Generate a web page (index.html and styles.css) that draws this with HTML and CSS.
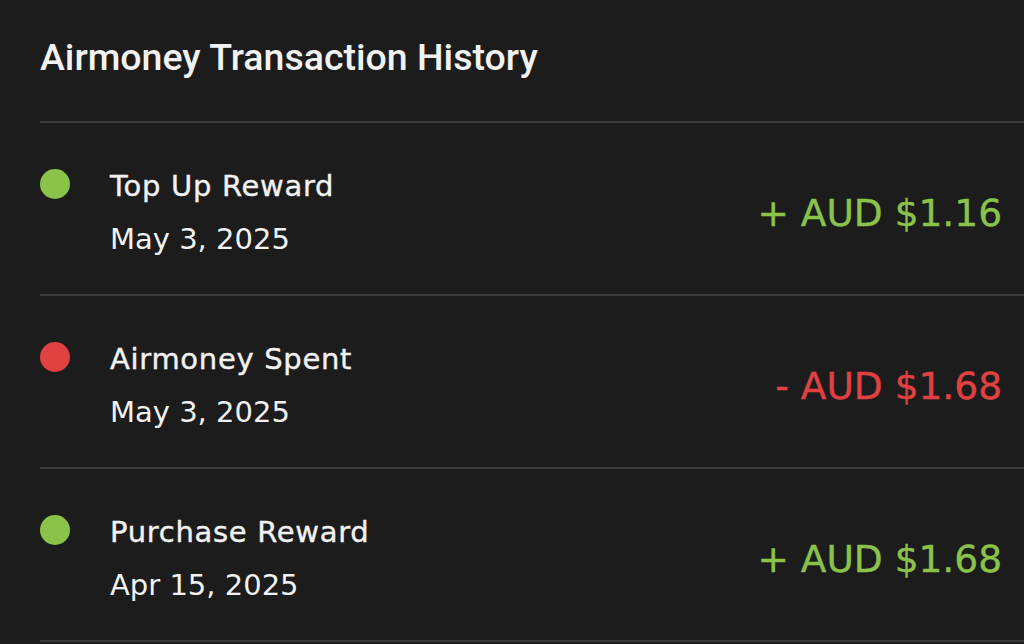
FILE: index.html
```html
<!DOCTYPE html>
<html lang="en">
<head>
<meta charset="utf-8">
<title>Airmoney Transaction History</title>
<link rel="stylesheet" href="styles.css">
</head>
<body>
<section class="history">
  <h1 class="history-title">Airmoney Transaction History</h1>
  <ul class="tx-list">
    <li class="tx">
      <span class="tx-dot dot-credit"></span>
      <div class="tx-info">
        <div class="tx-name">Top Up Reward</div>
        <div class="tx-date">May 3, 2025</div>
      </div>
      <div class="tx-amount amount-credit">+ AUD $1.16</div>
    </li>
    <li class="tx">
      <span class="tx-dot dot-debit"></span>
      <div class="tx-info">
        <div class="tx-name">Airmoney Spent</div>
        <div class="tx-date">May 3, 2025</div>
      </div>
      <div class="tx-amount amount-debit">- AUD $1.68</div>
    </li>
    <li class="tx">
      <span class="tx-dot dot-credit"></span>
      <div class="tx-info">
        <div class="tx-name">Purchase Reward</div>
        <div class="tx-date">Apr 15, 2025</div>
      </div>
      <div class="tx-amount amount-credit">+ AUD $1.68</div>
    </li>
  </ul>
</section>
</body>
</html>
```
FILE: styles.css
```css
html, body {
  margin: 0;
  padding: 0;
  background: #1c1c1c;
  height: 100%;
  overflow: hidden;
}
body {
  font-family: "DejaVu Sans", "Noto Sans", sans-serif;
  color: #f2f2f2;
}
.history {
  margin-left: 40px;
}
.history-title {
  margin: 0;
  padding: 35px 0 0 0;
  height: 86px;
  font-family: "Roboto", "Noto Sans", sans-serif;
  font-size: 37.5px;
  line-height: 44px;
  font-weight: 500;
  border-bottom: 2px solid #3a3a3a;
}
.tx-list {
  list-style: none;
  margin: 0;
  padding: 0;
}
.tx {
  display: flex;
  align-items: flex-start;
  padding: 37px 22px 28px 0;
  border-bottom: 2px solid #3a3a3a;
}
.tx-dot {
  flex: none;
  width: 30px;
  height: 30px;
  border-radius: 50%;
  margin-top: 9px;
  margin-right: 40px;
}
.dot-credit { background: #8bc34a; }
.dot-debit { background: #e14141; }
.tx-info {
  flex: 1;
}
.tx-name,
.tx-date {
  font-size: 29px;
  line-height: 53px;
}
.tx-name {
  letter-spacing: 0.7px;
  -webkit-text-stroke: 0.4px currentColor;
}
.tx-amount {
  align-self: center;
  font-size: 37.5px;
  line-height: 40px;
  -webkit-text-stroke: 0.4px currentColor;
}
.amount-credit { color: #8bc34a; }
.amount-debit { color: #e14141; }
```
